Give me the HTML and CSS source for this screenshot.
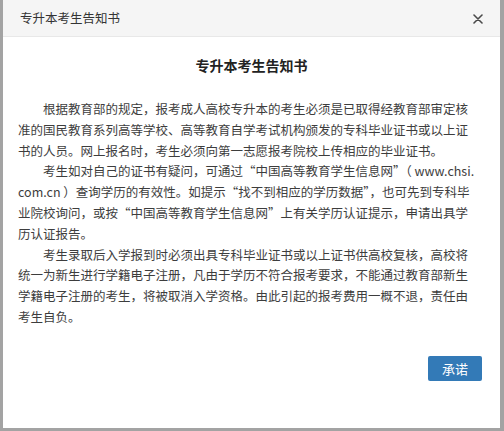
FILE: index.html
```html
<!DOCTYPE html>
<html lang="zh-CN">
<head>
<meta charset="utf-8">
<title>专升本考生告知书</title>
<link rel="stylesheet" href="styles.css">
</head>
<body>
<div class="dialog">
  <div class="dialog-header">
    <span class="dialog-title">专升本考生告知书</span>
    <button class="close" aria-label="关闭">
      <svg width="10" height="10" viewBox="0 0 10 10"><path d="M1 1L9 9M9 1L1 9" stroke="#4a4a4a" stroke-width="1.6" stroke-linecap="round"/></svg>
    </button>
  </div>
  <div class="dialog-body">
    <h2 class="notice-title">专升本考生告知书</h2>
    <p class="para">　　根据教育部的规定，报考成人高校专升本的考生必须是已取得经教育部审定核<br>准的国民教育系列高等学校、高等教育自学考试机构颁发的专科毕业证书或以上证<br>书的人员。网上报名时，考生必须向第一志愿报考院校上传相应的毕业证书。</p>
    <p class="para">　　考生如对自己的证书有疑问，可通过“中国高等教育学生信息网”（ www.chsi.<br>com.cn ）查询学历的有效性。如提示“找不到相应的学历数据”，也可先到专科毕<br>业院校询问，或按“中国高等教育学生信息网”上有关学历认证提示，申请出具学<br>历认证报告。</p>
    <p class="para">　　考生录取后入学报到时必须出具专科毕业证书或以上证书供高校复核，高校将<br>统一为新生进行学籍电子注册，凡由于学历不符合报考要求，不能通过教育部新生<br>学籍电子注册的考生，将被取消入学资格。由此引起的报考费用一概不退，责任由<br>考生自负。</p>
  </div>
  <div class="dialog-footer">
    <button class="btn-primary">承诺</button>
  </div>
</div>
</body>
</html>
```
FILE: styles.css
```css
html, body {
  margin: 0;
  padding: 0;
}
body {
  width: 504px;
  height: 431px;
  background: #a3a3a3;
  font-family: "Noto Sans CJK SC", "Noto Sans", sans-serif;
  overflow: hidden;
}
.dialog {
  margin-left: 3px;
  width: 497px;
  height: 428px;
  background: #fff;
  display: flex;
  flex-direction: column;
}
.dialog-header {
  height: 36px;
  background: #f5f5f5;
  border-bottom: 1px solid #e8e8e8;
  display: flex;
  align-items: center;
  justify-content: space-between;
  padding: 0 17px 0 17px;
  box-sizing: content-box;
}
.dialog-title {
  font-size: 12.5px;
  color: #333;
  line-height: 20px;
  margin-top: -1px;
}
.close {
  border: 0;
  background: none;
  padding: 0;
  width: 10px;
  height: 10px;
  display: flex;
  margin-top: 2px;
}
.dialog-body {
  padding: 18px 15px 0 15px;
  color: #3d3d3d;
}
.notice-title {
  margin: 0 0 24px 0;
  font-size: 14px;
  line-height: 20px;
  font-weight: bold;
  text-align: center;
  color: #222;
}
.para {
  margin: 0;
  font-size: 12.5px;
  line-height: 20.8px;
  white-space: nowrap;
}
.dialog-footer {
  display: flex;
  justify-content: flex-end;
  padding: 28px 18px 0 0;
}
.btn-primary {
  width: 54px;
  height: 25px;
  border: 0;
  border-radius: 2px;
  background: #337ab7;
  color: #fff;
  font-family: "Noto Sans CJK SC", sans-serif;
  font-size: 13px;
  padding: 0;
}
```
